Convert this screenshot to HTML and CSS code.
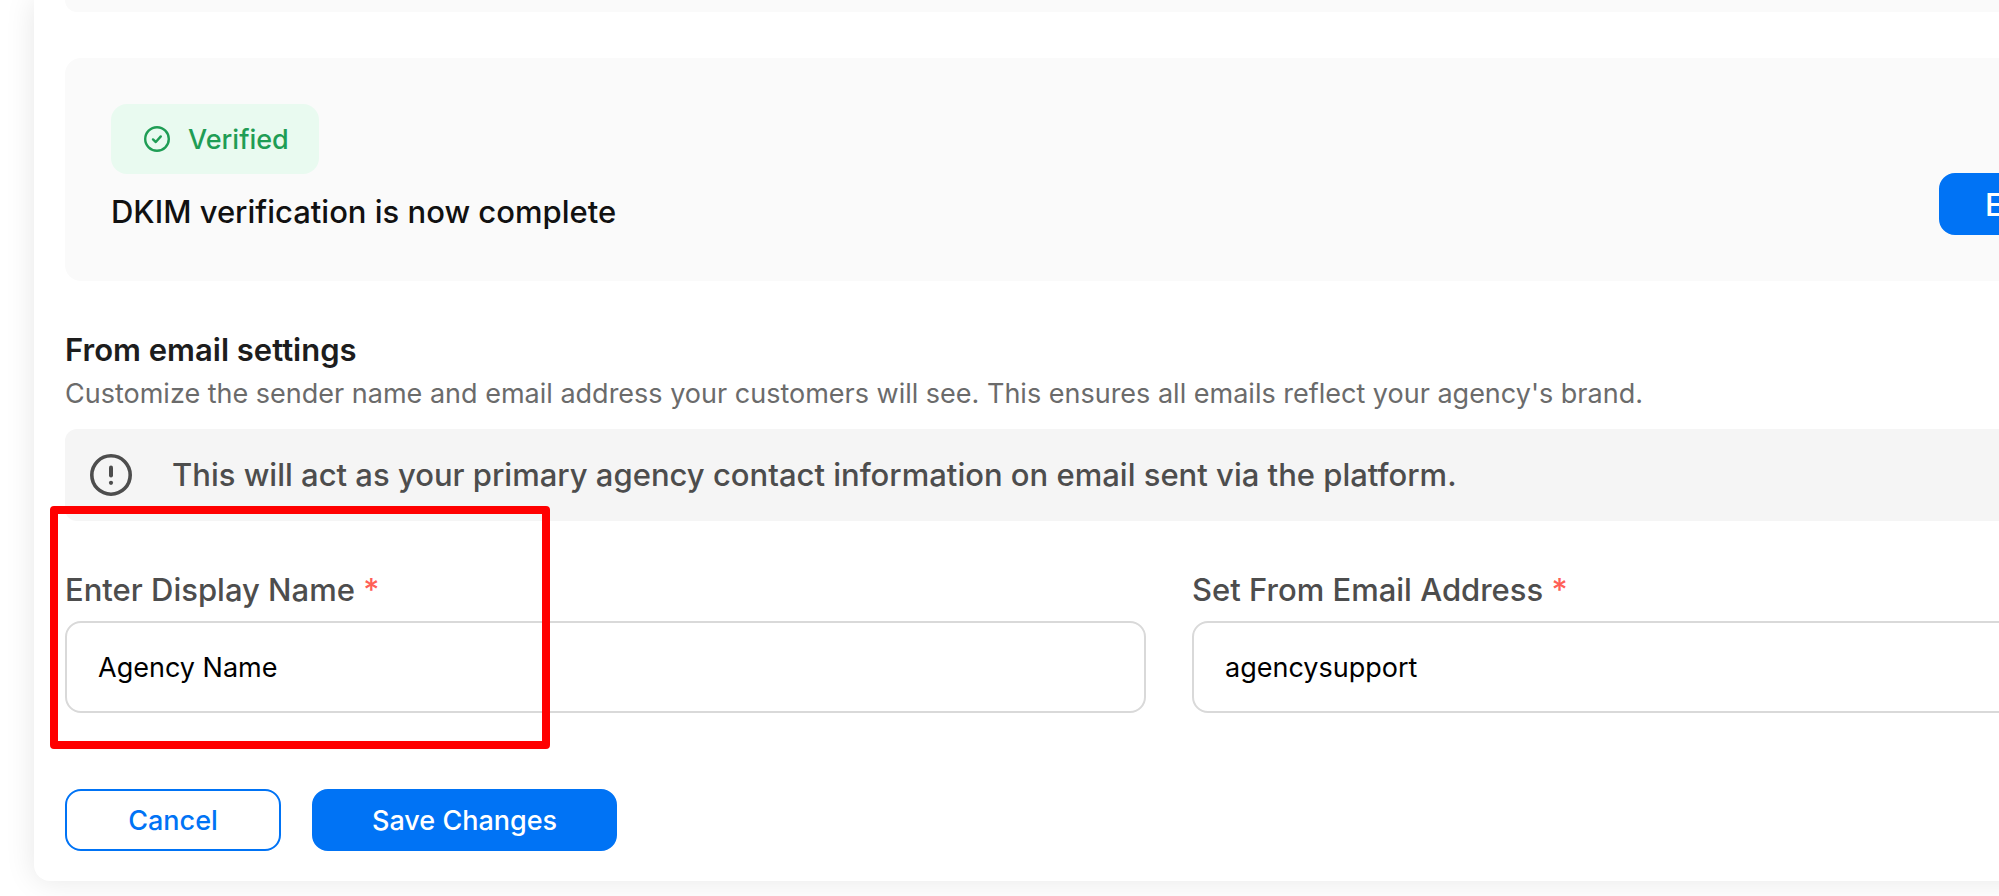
FILE: index.html
```
<!DOCTYPE html>
<html lang="en">
  <head>
    <meta charset="utf-8">
    <title>Email settings</title>
    <link rel="stylesheet" href="styles.css">
  </head>
  <body>
    <main class="card">
      <div class="panel panel-prev"></div>
      <section class="panel">
        <div class="panel-body">
          <span class="badge">
            <svg class="badge-icon" viewBox="0 0 26 26" fill="none" stroke="currentColor" stroke-width="2.4" stroke-linecap="round" stroke-linejoin="round" aria-hidden="true">
              <circle cx="13" cy="13" r="11.8"/>
              <path d="M9 13.4l2.8 2.6 5-5.6"/>
            </svg>
            Verified
          </span>
          <p class="panel-text">DKIM verification is now complete</p>
        </div>
        <button type="button" class="btn btn-primary btn-edit">Edit</button>
      </section>

      <h2 class="title">From email settings</h2>
      <p class="subtitle">Customize the sender name and email address your customers will see. This ensures all emails reflect your agency's brand.</p>

      <form class="form">
        <div class="notice">
          <svg class="notice-icon" viewBox="0 0 42 42" fill="none" stroke="currentColor" stroke-width="4" stroke-linecap="round" aria-hidden="true">
            <circle cx="21" cy="21" r="19.2" stroke-width="3.6"/>
            <path d="M21 13.6v7.8"/>
            <circle cx="21" cy="28.8" r="2.1" fill="currentColor" stroke="none"/>
          </svg>
          <span>This will act as your primary agency contact information on email sent via the platform.</span>
        </div>
        <div class="fields">
          <div class="field">
            <label for="display-name">Enter Display Name <span class="required">*</span></label>
            <input type="text" id="display-name" value="Agency Name">
            <div class="highlight"></div>
          </div>
          <div class="field">
            <label for="from-email">Set From Email Address <span class="required">*</span></label>
            <input type="text" id="from-email" value="agencysupport">
          </div>
        </div>
        <div class="actions">
          <button type="button" class="btn btn-outline">Cancel</button>
          <button type="submit" class="btn btn-primary">Save Changes</button>
        </div>
      </form>
    </main>
  </body>
</html>
```
FILE: styles.css
```
* { box-sizing: border-box; }
body {
  min-height: 100vh;
  margin: 0;
  overflow: hidden;
  background: #fff;
  color: #111;
  font-family: Inter, "Liberation Sans", sans-serif;
  font-size: 27px;
}
h2, p { margin: 0; }

/* wide card, runs past the right side of the window */
.card {
  min-width: 2270px;
  margin-left: 34px;
  padding: 0 31px 30px;
  background: #fff;
  border-radius: 0 0 16px 16px;
  box-shadow: 0 0 30px rgba(0, 0, 0, 0.1);
}

.panel {
  display: flex;
  justify-content: space-between;
  align-items: flex-end;
  margin-bottom: 46px;
  padding: 46px;
  background: #fafafa;
  border-radius: 16px;
}
.panel-prev {
  padding: 12px 0 0;
  border-radius: 0 0 16px 16px;
}
.panel-text {
  margin-top: 15px;
  font-size: 31px;
  font-weight: 500;
  line-height: 46px;
}
.badge {
  display: flex;
  align-items: center;
  gap: 18px;
  width: fit-content;
  height: 70px;
  padding: 0 30px 0 33px;
  background: #e9faf0;
  border-radius: 16px;
  color: #1f9d55;
  font-weight: 500;
}
.badge-icon { width: 26px; height: 26px; }

.title {
  color: #1d1d1d;
  font-size: 31px;
  font-weight: 600;
  line-height: 46px;
}
.subtitle {
  color: #6b6b6b;
  line-height: 42px;
}

.notice {
  display: flex;
  align-items: center;
  gap: 40px;
  height: 92px;
  margin: 14px 0 46px;
  padding: 0 25px;
  background: #f5f5f5;
  border-radius: 12px;
  color: #4d4d4d;
  font-size: 31px;
  font-weight: 500;
  line-height: 46px;
}
.notice-icon { width: 42px; height: 42px; }

.fields {
  display: grid;
  grid-template-columns: 1fr 1fr;
  gap: 46px;
}
.field {
  position: relative;
  display: flex;
  flex-direction: column;
  gap: 8px;
}
.field label {
  color: #4d4d4d;
  font-size: 31px;
  font-weight: 500;
  line-height: 46px;
}
.required { color: #ff5f57; }
.field input {
  width: 100%;
  height: 92px;
  padding: 0 31px;
  background: #fff;
  border: 2px solid #d9d9d9;
  border-radius: 16px;
  color: #000;
  font: inherit;
}
/* red marker drawn over the first field */
.highlight {
  position: absolute;
  top: -61px;
  left: -15px;
  width: 500px;
  height: 243px;
  border: 8px solid #f00;
  border-radius: 4px;
  pointer-events: none;
}

.actions {
  display: flex;
  gap: 31px;
  margin-top: 76px;
}
.btn {
  min-width: 216px;
  height: 62px;
  padding: 0 58px;
  border: 2px solid #0073f5;
  border-radius: 16px;
  font: inherit;
  font-weight: 500;
  cursor: pointer;
}
.btn-primary { background: #0073f5; color: #fff; }
.btn-outline { background: #fff; color: #0073f5; }
.btn-edit {
  width: 288px;
  padding: 0 44px;
  font-size: 31px;
  text-align: left;
}
```
